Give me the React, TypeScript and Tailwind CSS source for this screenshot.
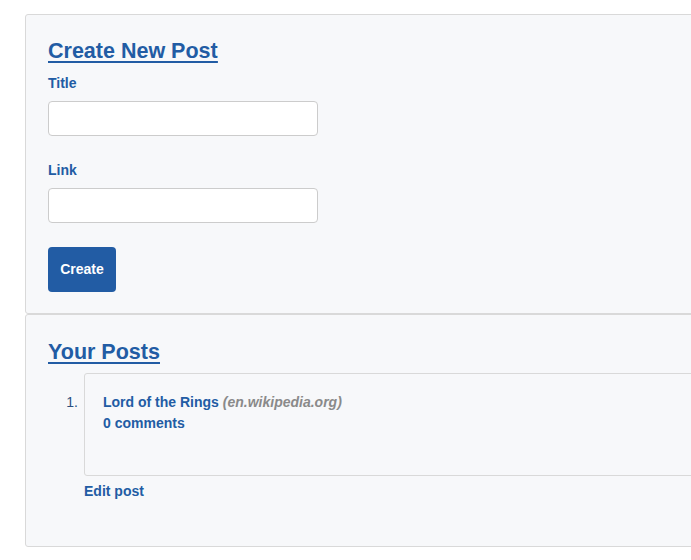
/* eslint-disable */
import React from "react";

const font = { fontFamily: '"Liberation Sans", Arial, sans-serif' };

export default function App() {
  return (
    <div
      className="w-screen min-h-[560px] overflow-hidden bg-white pl-[25px] pt-[14px]"
      style={font}
    >
      <div className="w-[760px]">
        {/* Create form */}
        <div className="rounded-[3px] border border-[#d9d9d9] bg-[#f7f8fa] px-[22px] pt-[24px] pb-[21px]">
          <h2 className="text-[21.5px] leading-[25px] font-bold text-[#225ca4] underline decoration-2 underline-offset-[3px]">
            <a href="#">Create New Post</a>
          </h2>

          <label className="mt-[11px] block text-[14px] leading-[16px] font-bold text-[#225ca4]">
            Title
          </label>
          <input
            type="text"
            className="mt-[10px] block h-[35px] w-[270px] rounded-[4px] border border-[#cccccc] bg-white px-2 text-[14px] outline-none"
          />

          <label className="mt-[26px] block text-[14px] leading-[16px] font-bold text-[#225ca4]">
            Link
          </label>
          <input
            type="text"
            className="mt-[10px] block h-[35px] w-[270px] rounded-[4px] border border-[#cccccc] bg-white px-2 text-[14px] outline-none"
          />

          <button className="mt-[24px] block h-[45px] w-[68px] rounded-[4px] bg-[#225ca4] text-[14px] font-bold text-white">
            Create
          </button>
        </div>

        {/* Posts list */}
        <div className="rounded-[3px] border border-[#d9d9d9] bg-[#f7f8fa] px-[22px] pt-[25px] pb-[47px]">
          <h2 className="text-[21.5px] leading-[25px] font-bold text-[#225ca4] underline decoration-2 underline-offset-[3px]">
            <a href="#">Your Posts</a>
          </h2>

          <ol className="mt-[8px]">
            <li className="flex">
              <span className="w-[36px] shrink-0 pt-[19px] pr-[6px] text-right text-[14px] leading-[21px] text-[#2a4f80]">
                1.
              </span>
              <div className="flex-1">
                <div className="rounded-[3px] border border-[#d9d9d9] px-[18px] pt-[18px] pb-[41px] text-[14px] leading-[21px] font-bold">
                  <div>
                    <a href="#" className="text-[#225ca4]">
                      Lord of the Rings
                    </a>{" "}
                    <span className="italic text-[#8a8a8a]">(en.wikipedia.org)</span>
                  </div>
                  <div>
                    <a href="#" className="text-[#225ca4]">
                      0 comments
                    </a>
                  </div>
                </div>
                <a
                  href="#"
                  className="mt-[7px] block text-[14px] leading-[16px] font-bold text-[#225ca4]"
                >
                  Edit post
                </a>
              </div>
            </li>
          </ol>
        </div>
      </div>
    </div>
  );
}
